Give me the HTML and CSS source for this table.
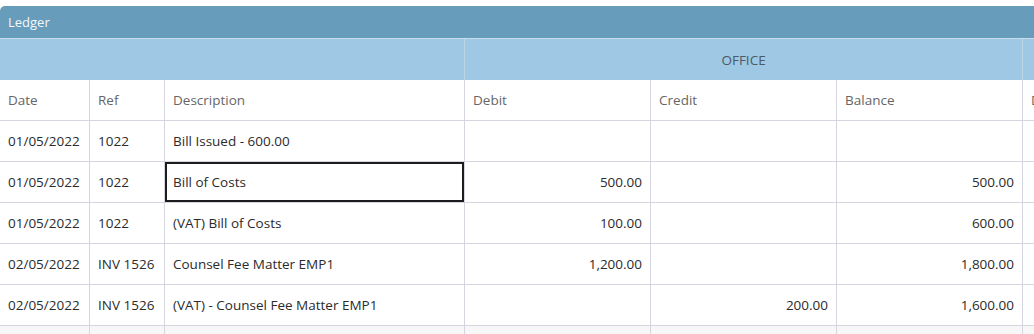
FILE: index.html
```html
<!DOCTYPE html>
<html>
<head>
<meta charset="utf-8">
<link rel="stylesheet" href="styles.css">
</head>
<body>
<div class="panel">
  <div class="panel-title">Ledger</div>
  <div class="grid-wrap">
    <table class="grid">
      <colgroup>
        <col class="c-date"><col class="c-ref"><col class="c-desc">
        <col class="c-num"><col class="c-num"><col class="c-num"><col class="c-num">
      </colgroup>
      <thead>
        <tr class="group-row">
          <th colspan="3"></th>
          <th colspan="3">OFFICE</th>
          <th></th>
        </tr>
        <tr class="head-row">
          <th>Date</th><th>Ref</th><th>Description</th>
          <th>Debit</th><th>Credit</th><th>Balance</th><th>Date</th>
        </tr>
      </thead>
      <tbody>
        <tr><td>01/05/2022</td><td>1022</td><td>Bill Issued - 600.00</td><td class="num"></td><td class="num"></td><td class="num"></td><td></td></tr>
        <tr><td>01/05/2022</td><td>1022</td><td class="selected">Bill of Costs</td><td class="num">500.00</td><td class="num"></td><td class="num">500.00</td><td></td></tr>
        <tr><td>01/05/2022</td><td>1022</td><td>(VAT) Bill of Costs</td><td class="num">100.00</td><td class="num"></td><td class="num">600.00</td><td></td></tr>
        <tr><td>02/05/2022</td><td>INV 1526</td><td>Counsel Fee Matter EMP1</td><td class="num">1,200.00</td><td class="num"></td><td class="num">1,800.00</td><td></td></tr>
        <tr><td>02/05/2022</td><td>INV 1526</td><td>(VAT) - Counsel Fee Matter EMP1</td><td class="num"></td><td class="num">200.00</td><td class="num">1,600.00</td><td></td></tr>
        <tr class="alt"><td></td><td></td><td></td><td></td><td></td><td></td><td></td></tr>
      </tbody>
    </table>
  </div>
</div>
</body>
</html>
```

FILE: styles.css
```css
html, body {
  margin: 0;
  padding: 0;
  background: #ffffff;
  overflow: hidden;
}
body {
  font-family: "Open Sans", "Noto Sans", sans-serif;
  font-size: 13.5px;
  color: #2b2b2b;
  padding-top: 6px;
}
.panel {
  width: 1200px;
  border-radius: 5px 5px 0 0;
  overflow: hidden;
}
.panel-title {
  height: 32px;
  line-height: 32px;
  padding-left: 8px;
  background: #679cba;
  color: #f4f8fb;
  font-size: 13px;
  border-bottom: 1px solid #c9dcea;
}
.grid {
  border-collapse: separate;
  border-spacing: 0;
  table-layout: fixed;
  width: 1200px;
}
.c-date { width: 90px; }
.c-ref { width: 75px; }
.c-desc { width: 300px; }
.c-num { width: 186px; }
.grid th, .grid td {
  border-right: 1px solid #d5d5df;
  padding: 0 8px;
  white-space: nowrap;
  overflow: hidden;
  text-align: left;
  font-weight: normal;
  vertical-align: middle;
}
.group-row th {
  height: 41px;
  background: #9ec8e3;
  color: #4c5966;
  text-align: center;
  border-right-color: #bcd5e6;
}
.head-row th {
  height: 40px;
  color: #666;
  border-bottom: 1px solid #d5d5df;
  background: #fff;
}
.grid td {
  height: 40px;
  border-bottom: 1px solid #d5d5df;
}
.grid td.num {
  text-align: right;
}
.grid td.selected {
  box-shadow: inset 0 0 0 2px #1c1c1c;
}
.grid tr.alt td {
  background: #f7f7f8;
}
```
